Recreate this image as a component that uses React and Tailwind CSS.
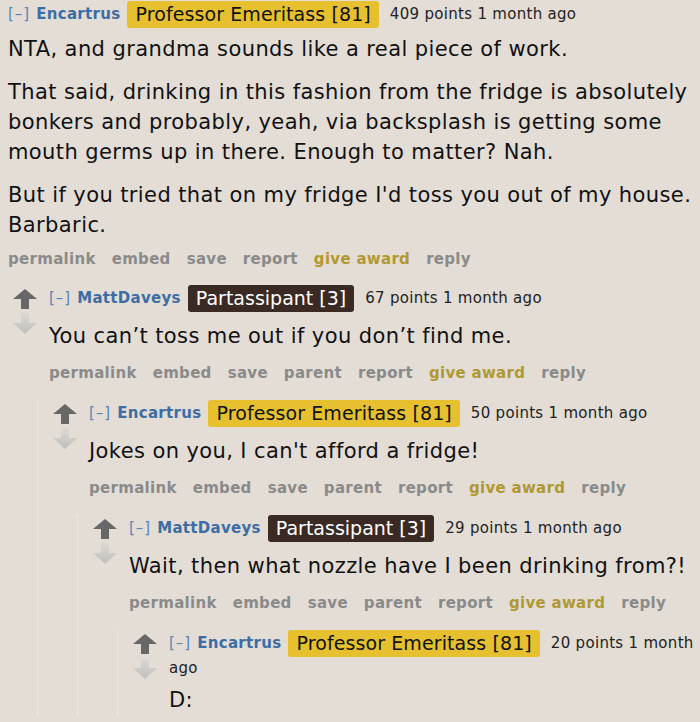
import React from "react";

const FONT = { fontFamily: '"DejaVu Sans", Verdana, sans-serif' };

function Up() {
  return (
    <svg width="24" height="20" viewBox="0 0 24 20" className="block">
      <path d="M12 0 L24 10 L16 10 L16 20 L8 20 L8 10 L0 10 Z" fill="#676767" />
    </svg>
  );
}

function Down() {
  return (
    <svg width="24" height="21" viewBox="0 0 24 21" className="block">
      <defs>
        <linearGradient id="dg" x1="0" y1="0" x2="0" y2="1">
          <stop offset="0" stopColor="#dcd9d5" />
          <stop offset="1" stopColor="#c0bfbd" />
        </linearGradient>
      </defs>
      <path d="M8 0 H16 V10 H24 L12 21 L0 10 H8 Z" fill="url(#dg)" />
    </svg>
  );
}

function Tagline({ user, flair, dark, points, wrap }) {
  return (
    <div className="text-[15px] leading-[22px] tracking-[0.3px] text-[#222]">
      <span className="text-[#5b86b5] tracking-[1px]">[–]</span>
      <span className="font-bold text-[#3d6da3] ml-[6px]">{user}</span>
      <span
        className={
          dark
            ? "inline-block align-middle h-[27px] leading-[27px] px-[8px] rounded-[3px] text-[19px] tracking-normal ml-[7px] mr-[11px] bg-[#3b2a24] text-white"
            : "inline-block align-middle h-[27px] leading-[27px] px-[8px] rounded-[3px] text-[19px] tracking-[0.1px] ml-[7px] mr-[11px] bg-[#e6c02e] text-[#111]"
        }
      >
        {flair}
      </span>
      <span className="whitespace-nowrap">{points}</span>
      {wrap ? (
        <>
          <br />
          <span>ago</span>
        </>
      ) : null}
    </div>
  );
}

function Buttons({ parent }) {
  return (
    <div className="flex gap-[16px] text-[15px] font-bold leading-[22px] tracking-[0.3px] text-[#8a8a8a] whitespace-nowrap">
      <span>permalink</span>
      <span>embed</span>
      <span>save</span>
      {parent ? <span>parent</span> : null}
      <span>report</span>
      <span className="text-[#b09933]">give award</span>
      <span>reply</span>
    </div>
  );
}

function Nested({ user, flair, dark, points, wrap, body, last, children }) {
  return (
    <div>
      <div className="flex">
        <div className="w-[36px] shrink-0 pt-[4px] flex flex-col gap-[4px]">
          <Up />
          <Down />
        </div>
        <div className="flex-1 min-w-0">
          <Tagline user={user} flair={flair} dark={dark} points={points} wrap={wrap} />
          <div
            className={
              wrap
                ? "mt-[6px] text-[21px] leading-[30px] tracking-[0.4px] text-[#111]"
                : "mt-[9px] text-[21px] leading-[30px] tracking-[0.4px] text-[#111] whitespace-nowrap"
            }
          >
            {body}
          </div>
          {last ? null : (
            <div className="mt-[11px]">
              <Buttons parent />
            </div>
          )}
        </div>
      </div>
      {children ? (
        <div className="mt-[16px] ml-[24px] border-l border-dotted border-[#f4f1ed] pl-[15px]">
          {children}
        </div>
      ) : null}
    </div>
  );
}

export default function App() {
  return (
    <div className="w-[700px] h-[722px] overflow-hidden bg-[#e3ddd6]" style={FONT}>
      <div className="pl-[8px] pt-[1px]">
        <Tagline user="Encartrus" flair="Professor Emeritass [81]" points="409 points 1 month ago" />
        <div className="mt-[6px] text-[21px] leading-[30px] tracking-[0.4px] text-[#111] whitespace-nowrap">
          <p>NTA, and grandma sounds like a real piece of work.</p>
          <p className="mt-[13px]">
            That said, drinking in this fashion from the fridge is absolutely
            <br />
            bonkers and probably, yeah, via backsplash is getting some
            <br />
            mouth germs up in there. Enough to matter? Nah.
          </p>
          <p className="mt-[13px]">
            But if you tried that on my fridge I'd toss you out of my house.
            <br />
            Barbaric.
          </p>
        </div>
        <div className="mt-[8px]">
          <Buttons />
        </div>
      </div>
      <div className="mt-[15px] pl-[13px]">
        <Nested
          user="MattDaveys"
          flair="Partassipant [3]"
          dark
          points="67 points 1 month ago"
          body="You can’t toss me out if you don’t find me."
        >
          <Nested
            user="Encartrus"
            flair="Professor Emeritass [81]"
            points="50 points 1 month ago"
            body="Jokes on you, I can't afford a fridge!"
          >
            <Nested
              user="MattDaveys"
              flair="Partassipant [3]"
              dark
              points="29 points 1 month ago"
              body="Wait, then what nozzle have I been drinking from?!"
            >
              <Nested
                user="Encartrus"
                flair="Professor Emeritass [81]"
                points="20 points 1 month"
                wrap
                last
                body="D:"
              />
            </Nested>
          </Nested>
        </Nested>
      </div>
    </div>
  );
}
